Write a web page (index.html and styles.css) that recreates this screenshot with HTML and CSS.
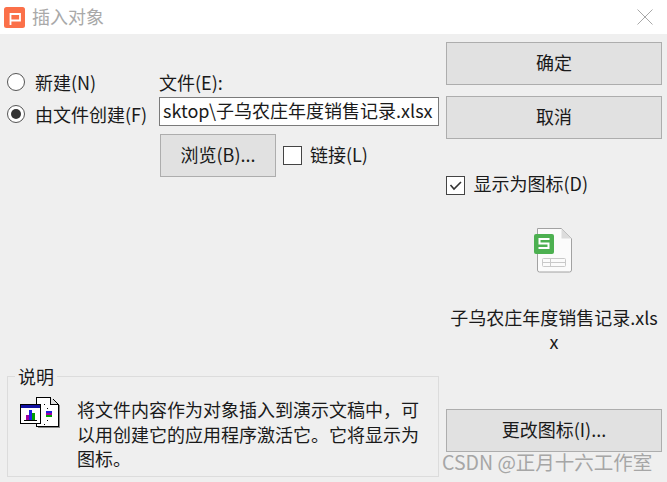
FILE: index.html
```html
<!DOCTYPE html>
<html lang="zh-CN">
<head>
    <meta charset="UTF-8">
    <meta name="viewport" content="width=device-width, initial-scale=1.0">
    <title>插入对象</title>
    <link rel="stylesheet" href="styles.css">
</head>
<body>
    <header class="titlebar">
        <svg class="app-logo" width="21" height="21" viewBox="0 0 21 21">
            <rect x="0" y="0" width="21" height="21" rx="2.5" fill="#fb7049"/>
            <path d="M6.5 18V7H16V13.5H6.5" fill="none" stroke="#fff" stroke-width="1.8"/>
        </svg>
        <span class="title-text">插入对象</span>
        <svg class="close-icon" width="16" height="16" viewBox="0 0 16 16">
            <path d="M0.5 0.5L15.5 15.5M15.5 0.5L0.5 15.5" stroke="#a8a8a8" stroke-width="1" fill="none"/>
        </svg>
    </header>

    <main class="dialog">
        <section class="left-col">
            <div class="source-row">
                <div class="radios">
                    <label class="radio-row"><span class="radio"></span>新建(N)</label>
                    <label class="radio-row"><span class="radio checked"></span>由文件创建(F)</label>
                </div>
                <div class="file-col">
                    <div class="file-label">文件(E):</div>
                    <div class="file-input">sktop\子乌农庄年度销售记录.xlsx</div>
                    <div class="browse-row">
                        <button class="btn browse-btn">浏览(B)...</button>
                        <span class="check"></span>
                        <span class="check-text">链接(L)</span>
                    </div>
                </div>
            </div>

            <fieldset class="result-box">
                <legend>说明</legend>
                <svg class="result-icon" width="42" height="33" viewBox="0 0 42 33" shape-rendering="crispEdges">
                    <path d="M16.5 0.5H30.5L38.5 7.5V29.5H16.5Z" fill="#fff" stroke="#000"/>
                    <path d="M30.5 0.5V7.5H38.5" fill="#ddd" stroke="#000"/>
                    <rect x="39" y="8" width="1" height="23" fill="#888"/>
                    <rect x="18" y="30" width="22" height="1" fill="#888"/>
                    <rect x="26" y="14" width="6" height="2" fill="#2020e0"/>
                    <rect x="26" y="16" width="6" height="2" fill="#a000a0"/>
                    <rect x="26" y="18" width="6" height="2" fill="#00a000"/>
                    <rect x="24" y="7" width="1" height="1" fill="#000"/>
                    <rect x="27" y="11" width="1" height="1" fill="#000"/>
                    <rect x="27" y="23" width="1" height="1" fill="#000"/>
                    <rect x="24" y="27" width="1" height="1" fill="#000"/>
                    <rect x="0.5" y="7.5" width="20" height="19" fill="#fff" stroke="#000"/>
                    <rect x="1" y="8" width="19" height="3" fill="#1010a0"/>
                    <rect x="6" y="18" width="3" height="5" fill="#a000a0"/>
                    <rect x="9" y="13" width="3" height="10" fill="#2020e0"/>
                    <rect x="12" y="16" width="3" height="7" fill="#00a000"/>
                    <rect x="4" y="23" width="13" height="1" fill="#000"/>
                </svg>
                <p class="result-text">将文件内容作为对象插入到演示文稿中，可以用创建它的应用程序激活它。它将显示为图标。</p>
            </fieldset>
        </section>

        <aside class="right-col">
            <button class="btn">确定</button>
            <button class="btn">取消</button>
            <div class="icon-check">
                <span class="check">
                    <svg width="17" height="17" viewBox="0 0 17 17">
                        <path d="M3.5 8L7 12L14 5" fill="none" stroke="#333" stroke-width="1.6"/>
                    </svg>
                </span>
                <span class="check-text">显示为图标(D)</span>
            </div>
            <svg class="sheet-icon" width="38" height="45" viewBox="0 0 38 45">
                <path d="M3.5 0.5H27.5L37.5 10.5V42a2 2 0 0 1-2 2H5.5a2 2 0 0 1-2-2Z" fill="#fbfbfb" stroke="#a2a2a2"/>
                <path d="M27.5 0.5V10.5H37.5Z" fill="#dcdcdc"/>
                <rect x="8.5" y="30.5" width="23" height="8" rx="1" fill="none" stroke="#c9c9c9"/>
                <path d="M8.5 34.5H31.5M16.5 30.5V38.5" stroke="#c9c9c9" fill="none"/>
                <rect x="0" y="6" width="20" height="20" rx="2" fill="#4cb050"/>
                <path d="M15.5 11H5.5V15.5H14.5V20H4.5" fill="none" stroke="#fff" stroke-width="2"/>
            </svg>
            <div class="sheet-name">子乌农庄年度销售记录.xlsx</div>
            <button class="btn change-btn">更改图标(I)...</button>
        </aside>
    </main>

    <div class="watermark">CSDN @正月十六工作室</div>
</body>
</html>
```

FILE: styles.css
```css
* {
    box-sizing: border-box;
}

body {
    margin: 0;
    width: 667px;
    height: 482px;
    overflow: hidden;
    position: relative;
    background-color: #efefef;
    color: #1a1a1a;
    font-family: "Noto Sans CJK SC", "Noto Sans", sans-serif;
    font-size: 18px;
}

.titlebar {
    height: 34px;
    background-color: #fff;
    display: flex;
    align-items: center;
    padding: 0 14px 0 4px;
    gap: 7px;
}

.title-text {
    color: #a9a9a9;
    font-size: 18px;
    padding-bottom: 2px;
}

.close-icon {
    margin-left: auto;
}

.dialog {
    height: 448px;
    display: flex;
}

.left-col {
    width: 446px;
    display: flex;
    flex-direction: column;
    padding: 32px 0 5px 7px;
}

.source-row {
    display: flex;
}

.radios {
    width: 152px;
}

.radio-row {
    height: 32px;
    display: flex;
    align-items: center;
    gap: 10px;
    line-height: 28px;
    padding-bottom: 1px;
}

.radio {
    width: 18px;
    height: 18px;
    border: 1px solid #555;
    border-radius: 50%;
    background-color: #fff;
    display: flex;
    align-items: center;
    justify-content: center;
}

.radio.checked::after {
    content: "";
    width: 10px;
    height: 10px;
    border-radius: 50%;
    background-color: #333;
}

.file-label {
    height: 31px;
    line-height: 32px;
}

.file-input {
    width: 280px;
    height: 29px;
    line-height: 25px;
    padding-left: 3px;
    background-color: #fff;
    border: 1px solid #7a7a7a;
    white-space: nowrap;
    overflow: hidden;
}

.browse-row {
    margin: 8px 0 0 1px;
    display: flex;
    align-items: center;
    gap: 8px;
}

.btn {
    height: 43px;
    width: 216px;
    padding: 0 0 3px;
    background-color: #e1e1e1;
    border: 1px solid #adadad;
    color: #1a1a1a;
    font-family: inherit;
    font-size: 18px;
}

.browse-btn {
    width: 116px;
    margin-right: -1px;
}

.check {
    width: 19px;
    height: 19px;
    background-color: #fff;
    border: 1px solid #444;
    display: block;
}

.check svg {
    display: block;
}

.check-text {
    line-height: 24px;
    padding-bottom: 4px;
}

.result-box {
    margin: auto 0 0;
    width: 432px;
    height: 111px;
    padding: 0 12px;
    border: 1px solid #dcdcdc;
    border-radius: 0;
    display: flex;
    align-items: flex-start;
}

.result-box legend {
    margin-left: -5px;
    padding: 0 3px;
    line-height: 20px;
}

.result-icon {
    flex: none;
    margin-top: 11px;
}

.result-text {
    margin: 11px 0 0 15px;
    line-height: 24.5px;
}

.right-col {
    width: 216px;
    padding: 8px 0 30px;
    display: flex;
    flex-direction: column;
    align-items: center;
    gap: 11px;
}

.icon-check {
    width: 100%;
    margin: 21px 0 0 -1px;
    display: flex;
    align-items: center;
    gap: 9px;
}

.sheet-icon {
    margin: 18px 0 0 -2px;
}

.sheet-name {
    width: 212px;
    margin-top: 21px;
    text-align: center;
    line-height: 24px;
    word-break: break-all;
}

.change-btn {
    margin-top: auto;
}

.watermark {
    position: absolute;
    left: 442px;
    top: 449px;
    color: #a6a6a6;
    font-size: 19.5px;
    line-height: 26px;
    white-space: nowrap;
}
```
